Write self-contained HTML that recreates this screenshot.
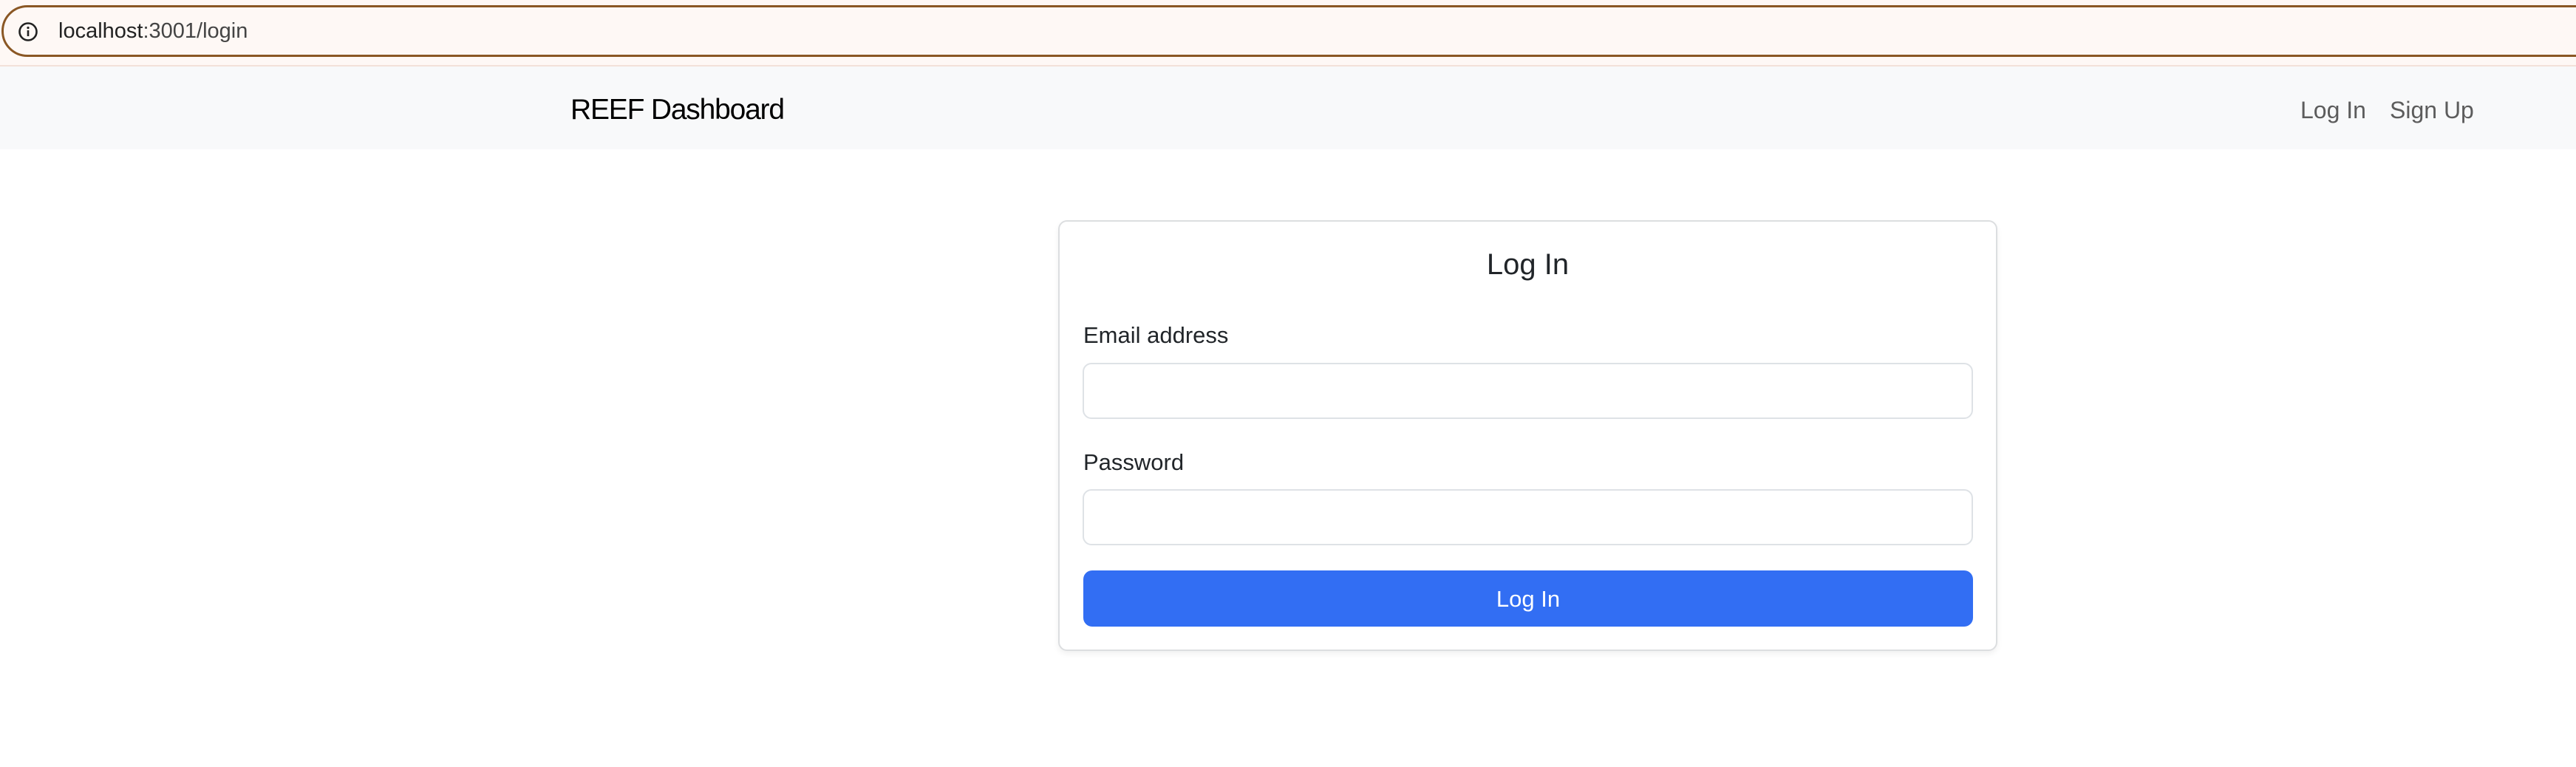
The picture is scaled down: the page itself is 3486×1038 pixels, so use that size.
<!DOCTYPE html>
<html><head><meta charset="utf-8"><style>
html,body{margin:0;padding:0;width:3486px;height:1038px;background:#fff;overflow:hidden;font-family:"Liberation Sans",sans-serif;}
.top{position:absolute;left:0;top:0;width:3486px;height:88px;background:#fef8f5;}
.addr{position:absolute;left:2px;top:7px;width:3520px;height:64px;border:3.5px solid #8a5724;border-radius:36px;box-sizing:content-box;}
.sep{position:absolute;left:0;top:88px;width:3486px;height:2px;background:#f3e1d9;}
.nav{position:absolute;left:0;top:90px;width:3486px;height:112px;background:#f8f9fa;}
.t{position:absolute;white-space:nowrap;}
.card{position:absolute;left:1432px;top:298px;width:1271px;height:583px;border:2px solid #dcdee0;border-radius:12px;box-shadow:0 4px 8px rgba(0,0,0,.06);box-sizing:border-box;background:#fff;}
.inp{position:absolute;left:1465px;width:1205px;height:76px;border:2px solid #dee2e6;border-radius:12px;box-sizing:border-box;background:#fff;}
.btn{position:absolute;left:1466px;top:772px;width:1204px;height:76px;background:#326ef3;border-radius:12px;}
</style></head><body>
<div class="top"></div>
<div class="addr"></div>
<svg style="position:absolute;left:24px;top:29px" width="28" height="28" viewBox="0 0 28 28"><circle cx="14" cy="14" r="11.5" fill="none" stroke="#222" stroke-width="2.6"/><rect x="12.7" y="12" width="2.6" height="8" fill="#222"/><circle cx="14" cy="8.6" r="1.6" fill="#222"/></svg>
<div class="t" style="left:79px;top:25px;font-size:29px;line-height:34px;color:#222">localhost<span style="color:#444">:3001/login</span></div>
<div class="sep"></div>
<div class="nav"></div>
<div class="t" style="left:772px;top:127px;font-size:39px;line-height:44px;color:#000;letter-spacing:-1.2px">REEF Dashboard</div>
<div class="t" style="left:3113px;top:130px;font-size:32px;line-height:38px;color:#5c5c5c">Log In</div>
<div class="t" style="left:3234px;top:130px;font-size:32px;line-height:38px;color:#5c5c5c">Sign Up</div>
<div class="card"></div>
<div class="t" style="left:1432px;width:1271px;text-align:center;top:335px;font-size:40px;line-height:46px;color:#212529">Log In</div>
<div class="t" style="left:1466px;top:436px;font-size:31px;line-height:36px;color:#212529">Email address</div>
<div class="inp" style="top:491px"></div>
<div class="t" style="left:1466px;top:608px;font-size:31px;line-height:36px;color:#212529">Password</div>
<div class="inp" style="top:662px"></div>
<div class="btn"></div>
<div class="t" style="left:1466px;width:1204px;text-align:center;top:793px;font-size:31px;line-height:36px;color:#fff">Log In</div>
</body></html>
